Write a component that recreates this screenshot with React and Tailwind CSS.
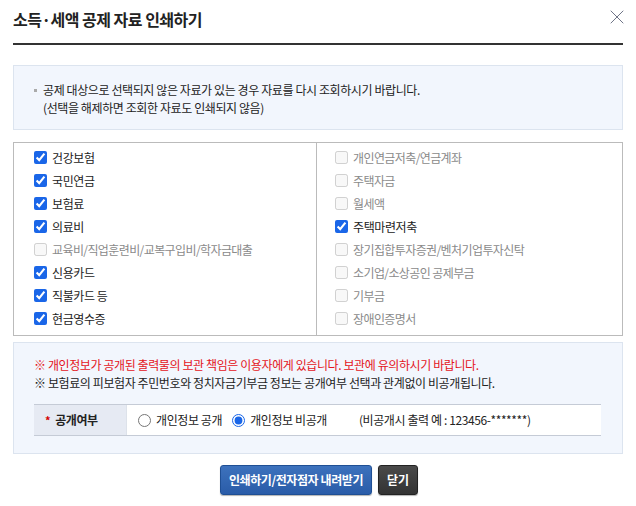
import { X } from "lucide-react";

const left = [
  { label: "건강보험", checked: true },
  { label: "국민연금", checked: true },
  { label: "보험료", checked: true },
  { label: "의료비", checked: true },
  { label: "교육비/직업훈련비/교복구입비/학자금대출", disabled: true },
  { label: "신용카드", checked: true },
  { label: "직불카드 등", checked: true },
  { label: "현금영수증", checked: true },
];

const right = [
  { label: "개인연금저축/연금계좌", disabled: true },
  { label: "주택자금", disabled: true },
  { label: "월세액", disabled: true },
  { label: "주택마련저축", checked: true },
  { label: "장기집합투자증권/벤처기업투자신탁", disabled: true },
  { label: "소기업/소상공인 공제부금", disabled: true },
  { label: "기부금", disabled: true },
  { label: "장애인증명서", disabled: true },
];

function CheckList({ items, className }) {
  return (
    <div className={`pt-[3px] pb-[5px] ${className}`}>
      {items.map((it) => (
        <label key={it.label} className="flex items-center h-[23px] gap-[5px]">
          <input
            type="checkbox"
            defaultChecked={it.checked}
            disabled={it.disabled}
            className="w-[13px] h-[13px] m-0 accent-[#1a66e8]"
          />
          <span className={it.disabled ? "text-[#8a8a8a] tracking-[-0.6px]" : "text-[#222]"}>{it.label}</span>
        </label>
      ))}
    </div>
  );
}

export default function App() {
  return (
    <div
      className="w-[636px] h-[506px] bg-white px-[13px] text-[12px] leading-[18px] text-[#222]"
      style={{ fontFamily: '"Noto Sans CJK KR", "Noto Sans", sans-serif' }}
    >
      <div className="flex items-center justify-between h-[45px] pb-[6px] border-b-2 border-[#333]">
        <h1 className="text-[16px] font-bold tracking-[-0.5px] text-[#222]">소득·세액 공제 자료 인쇄하기</h1>
        <X size={24} strokeWidth={0.8} className="text-[#4a5068] mr-[-6px] mt-[-3px]" />
      </div>

      <div className="mt-[20px] bg-[#f2f6fd] border border-[#dce4ef] pt-[15px] pb-[12px] pl-[20px] text-[#222] tracking-[-0.4px]">
        <p className="flex items-center">
          <span className="w-[3px] h-[3px] bg-[#aaa] mr-[6px]" />
          공제 대상으로 선택되지 않은 자료가 있는 경우 자료를 다시 조회하시기 바랍니다.
        </p>
        <p className="pl-[9px]">(선택을 해제하면 조회한 자료도 인쇄되지 않음)</p>
      </div>

      <div className="mt-[12px] border border-[#bbb] grid grid-cols-[303px_1fr] tracking-[-0.4px]">
        <CheckList items={left} className="pl-[20px] border-r border-[#bbb]" />
        <CheckList items={right} className="pl-[18px]" />
      </div>

      <div className="mt-[6px] bg-[#f2f6fd] border border-[#dce4ef] pt-[13px] pb-[17px] px-[20px] tracking-[-0.4px]">
        <p className="text-[#e4141b]">※ 개인정보가 공개된 출력물의 보관 책임은 이용자에게 있습니다. 보관에 유의하시기 바랍니다.</p>
        <p>※ 보험료의 피보험자 주민번호와 정치자금기부금 정보는 공개여부 선택과 관계없이 비공개됩니다.</p>
        <div className="mt-[12px] mr-[1px] flex h-[32px] border-y border-[#c5cbd6] bg-white">
          <div className="w-[93px] bg-[#e6eaf3] flex items-center pl-[11px] font-bold border-r border-[#dde2ea]">
            <span className="text-[#d40000] mr-[5px] text-[11px]">*</span>
            공개여부
          </div>
          <div className="flex items-center pl-[11px]">
            <label className="flex items-center gap-[5px]">
              <input type="radio" name="open" className="w-[13px] h-[13px] m-0 accent-[#1a66e8]" />
              개인정보 공개
            </label>
            <label className="flex items-center gap-[5px] ml-[10px]">
              <input type="radio" name="open" defaultChecked className="w-[13px] h-[13px] m-0 accent-[#1a66e8]" />
              개인정보 비공개
            </label>
            <span className="ml-[32px]">(비공개시 출력 예 : 123456-*******)</span>
          </div>
        </div>
      </div>

      <div className="mt-[11px] flex justify-center gap-[6px] ml-[2px]">
        <button className="h-[30px] w-[152px] rounded-[3px] border border-[#1f4f94] bg-gradient-to-b from-[#3d72bd] to-[#2a5ca8] text-white font-bold tracking-[-0.4px] shadow-[0_1px_1px_rgba(0,0,0,0.3)]">
          인쇄하기/전자점자 내려받기
        </button>
        <button className="h-[30px] w-[40px] rounded-[3px] border border-[#222] bg-gradient-to-b from-[#4a4a4a] to-[#333] text-white font-bold shadow-[0_1px_1px_rgba(0,0,0,0.3)]">
          닫기
        </button>
      </div>
    </div>
  );
}
